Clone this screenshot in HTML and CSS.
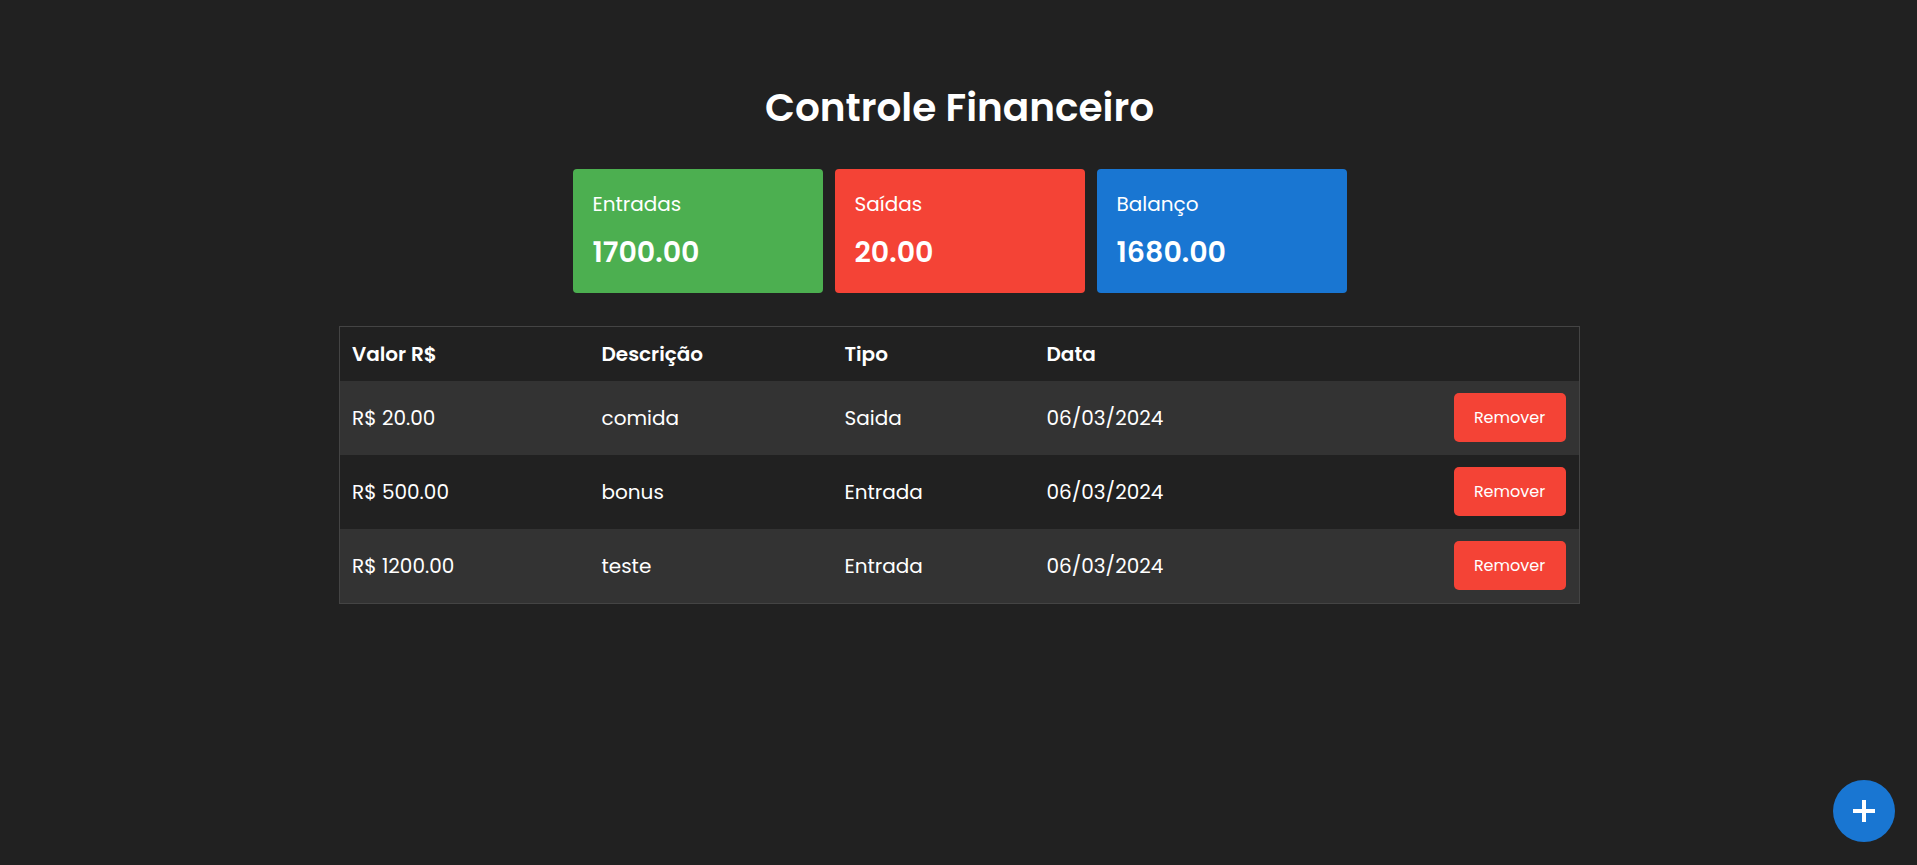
FILE: index.html
```html
<!DOCTYPE html>
<html lang="pt-BR">
<head>
<meta charset="utf-8">
<title>Controle Financeiro</title>
<link rel="stylesheet" href="styles.css">
</head>
<body>
<main class="page">
  <h1 class="title">Controle Financeiro</h1>
  <section class="cards">
    <div class="card card-in">
      <div class="card-label">Entradas</div>
      <div class="card-value">1700.00</div>
    </div>
    <div class="card card-out">
      <div class="card-label">Saídas</div>
      <div class="card-value">20.00</div>
    </div>
    <div class="card card-bal">
      <div class="card-label">Balanço</div>
      <div class="card-value">1680.00</div>
    </div>
  </section>
  <table class="tx-table">
    <colgroup>
      <col class="col-valor">
      <col class="col-desc">
      <col class="col-tipo">
      <col class="col-data">
      <col class="col-acao">
    </colgroup>
    <thead>
      <tr>
        <th>Valor R$</th>
        <th>Descrição</th>
        <th>Tipo</th>
        <th>Data</th>
        <th></th>
      </tr>
    </thead>
    <tbody>
      <tr>
        <td>R$ 20.00</td>
        <td>comida</td>
        <td>Saida</td>
        <td>06/03/2024</td>
        <td class="cell-acao"><button class="btn-remove">Remover</button></td>
      </tr>
      <tr>
        <td>R$ 500.00</td>
        <td>bonus</td>
        <td>Entrada</td>
        <td>06/03/2024</td>
        <td class="cell-acao"><button class="btn-remove">Remover</button></td>
      </tr>
      <tr>
        <td>R$ 1200.00</td>
        <td>teste</td>
        <td>Entrada</td>
        <td>06/03/2024</td>
        <td class="cell-acao"><button class="btn-remove">Remover</button></td>
      </tr>
    </tbody>
  </table>
</main>
<button class="fab" aria-label="Adicionar">
  <svg width="22" height="22" viewBox="0 0 22 22" aria-hidden="true">
    <rect x="0" y="9" width="22" height="4" fill="#fff"/>
    <rect x="9" y="0" width="4" height="22" fill="#fff"/>
  </svg>
</button>
</body>
</html>
```
FILE: styles.css
```css
html, body {
  margin: 0;
  padding: 0;
}
body {
  background: #212121;
  color: #ffffff;
  font-family: "Poppins", "Inter", "Noto Sans", sans-serif;
  font-size: 20px;
}
.page {
  display: flex;
  flex-direction: column;
  align-items: center;
  padding-top: 84px;
  padding-left: 2px;
}
.title {
  margin: 0;
  font-size: 39px;
  line-height: 48px;
  font-weight: 600;
}
.cards {
  display: flex;
  gap: 12px;
  margin-top: 37px;
}
.card {
  width: 250px;
  box-sizing: border-box;
  padding: 20px 20px 23px;
  border-radius: 4px;
}
.card-in { background: #4caf50; }
.card-out { background: #f44336; }
.card-bal { background: #1976d2; }
.card-label {
  font-size: 20px;
  line-height: 30px;
}
.card-value {
  margin-top: 15px;
  font-size: 28.5px;
  line-height: 36px;
  font-weight: 600;
}
.tx-table {
  margin-top: 33px;
  width: 1240px;
  border-collapse: collapse;
  border: 1px solid #444444;
  table-layout: fixed;
}
.tx-table th,
.tx-table td {
  padding: 12px 12px;
  text-align: left;
  line-height: 30px;
  font-size: 20px;
  vertical-align: middle;
}
.tx-table th {
  font-weight: 600;
}
.col-valor { width: 250px; }
.col-desc { width: 243px; }
.col-tipo { width: 202px; }
.col-data { width: 407px; }
.col-acao { width: 138px; }
.tx-table tbody tr:nth-child(odd) {
  background: #333333;
}
.cell-acao {
  text-align: right;
}
.tx-table td.cell-acao {
  padding: 12px 12px 13px;
}
.btn-remove {
  display: inline-block;
  width: 112px;
  height: 49px;
  border: none;
  border-radius: 5px;
  background: #f44336;
  color: #ffffff;
  font-family: inherit;
  font-size: 16px;
  cursor: pointer;
  vertical-align: middle;
}
.fab {
  position: fixed;
  right: 22px;
  bottom: 23px;
  width: 62px;
  height: 62px;
  border-radius: 50%;
  border: none;
  background: #1976d2;
  display: flex;
  align-items: center;
  justify-content: center;
  padding: 0;
  cursor: pointer;
}
.fab svg {
  display: block;
}
```
